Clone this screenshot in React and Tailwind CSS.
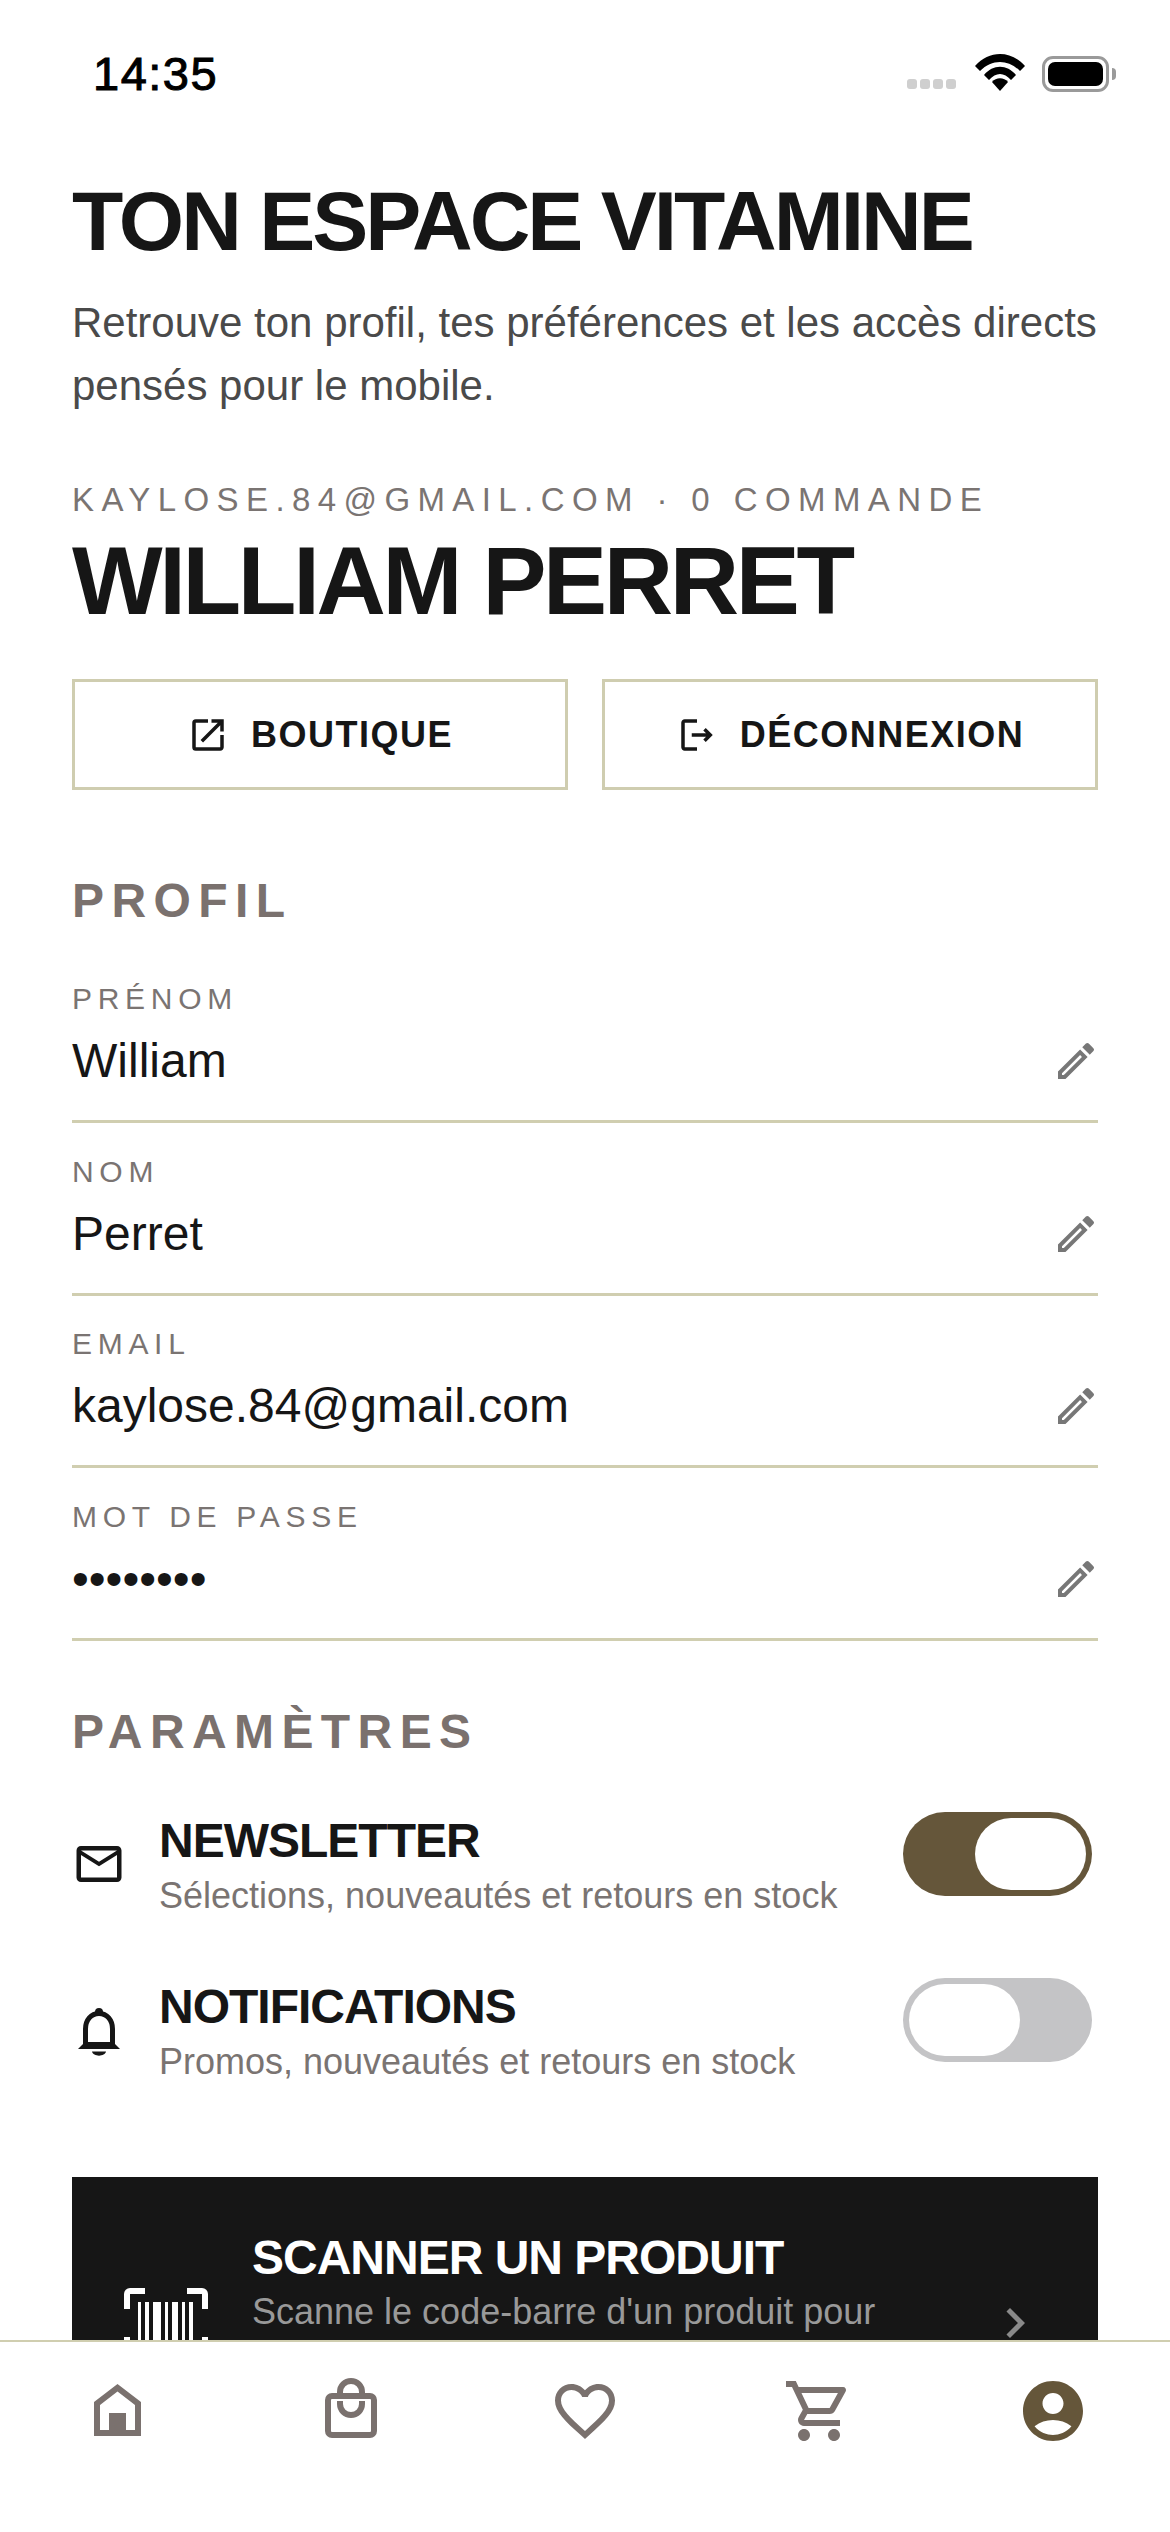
import React from 'react';
import {
  MdOutlineOpenInNew,
  MdOutlineLogout,
  MdOutlineEdit,
  MdOutlineMailOutline,
  MdChevronRight,
  MdFavoriteBorder,
  MdOutlineShoppingCart,
  MdAccountCircle,
} from 'react-icons/md';

const fields = [
  { label: 'PRÉNOM', value: 'William' },
  { label: 'NOM', value: 'Perret' },
  { label: 'EMAIL', value: 'kaylose.84@gmail.com' },
  { label: 'MOT DE PASSE', value: '••••••••' },
];

const StatusBar = () => (
  <div className="relative h-[173px] shrink-0">
    <span className="absolute left-[93px] top-[46px] text-[47px] leading-[56px] font-normal tracking-[1.5px] text-black [-webkit-text-stroke:1px_#000]">
      14:35
    </span>
    <div className="absolute left-[907px] top-[79px] flex gap-[3px]">
      <span className="w-[10px] h-[10px] rounded-[3px] bg-[#cfcfcf]" />
      <span className="w-[10px] h-[10px] rounded-[3px] bg-[#cfcfcf]" />
      <span className="w-[10px] h-[10px] rounded-[3px] bg-[#cfcfcf]" />
      <span className="w-[10px] h-[10px] rounded-[3px] bg-[#cfcfcf]" />
    </div>
    <svg className="absolute left-[975px] top-[53px]" width="50" height="38" viewBox="0 0 50 38">
      <path d="M0 13 C14 -3 36 -3 50 13 L45 18 C33 6 17 6 5 18Z" fill="#000" />
      <path d="M9 22 C18 11 32 11 41 22 L36 27 C29 19 21 19 14 27Z" fill="#000" />
      <path d="M17 29 C21 24 29 24 33 29 L25 38Z" fill="#000" />
    </svg>
    <div className="absolute left-[1042px] top-[56px] w-[67px] h-[36px] rounded-[11px] border-[3px] border-[#9a9a9a] p-[3px]">
      <div className="w-full h-full rounded-[7px] bg-black" />
    </div>
    <span className="absolute left-[1112px] top-[68px] w-[4px] h-[12px] rounded-r-full bg-[#9a9a9a]" />
  </div>
);

const BarcodeIcon = () => (
  <svg className="shrink-0" width="84" height="70" viewBox="0 0 84 70" fill="#fff">
    <path d="M0 21V6a6 6 0 0 1 6-6h15v6H6v15z" />
    <path d="M84 21V6a6 6 0 0 0-6-6H63v6h15v15z" />
    <path d="M0 49v15a6 6 0 0 0 6 6h15v-6H6V49z" />
    <path d="M84 49v15a6 6 0 0 1-6 6H63v-6h15V49z" />
    <rect x="14" y="14" width="3" height="42" />
    <rect x="21" y="14" width="4" height="42" />
    <rect x="29" y="14" width="8" height="42" />
    <rect x="41" y="14" width="3" height="42" />
    <rect x="48" y="14" width="6" height="42" />
    <rect x="58" y="14" width="3" height="42" />
    <rect x="65" y="14" width="4" height="42" />
  </svg>
);

const HomeIcon = () => (
  <svg width="47" height="52" viewBox="0 0 47 52" fill="#7a716e">
    <path
      fillRule="evenodd"
      d="M23.5 0L47 18V52H0V18ZM23.5 7.5L6 21V46H15V29H32V46H41V21Z"
    />
  </svg>
);

// bag with the handle looping over the top and a U under the band
const BagIcon = () => (
  <svg width="52" height="60" viewBox="0 0 52 60" fill="none" stroke="#7a716e" strokeWidth="6">
    <rect x="3" y="18" width="46" height="39" rx="4" />
    <path d="M15 18V14A11 11 0 0 1 37 14V18" />
    <path d="M15 23V26A11 11 0 0 0 37 26V23" />
  </svg>
);

// bell from the reference: dome, flared base and a small clapper
const BellIcon = () => (
  <svg width="42" height="48" viewBox="0 0 42 48" fill="#161616">
    <circle cx="21" cy="4" r="4" />
    <path d="M7.5 37V21C7.5 12 13 5.5 21 5.5S34.5 12 34.5 21V37" fill="none" stroke="#161616" strokeWidth="5" />
    <path d="M0 41L7 34H35L42 41Z" />
    <path d="M14 43.5H28C27 49 15 49 14 43.5Z" />
  </svg>
);

const Toggle = ({ on }) => (
  <div
    className={`w-[189px] h-[84px] rounded-full p-[6px] shrink-0 mr-[6px] flex ${
      on ? 'bg-[#65563a] justify-end' : 'bg-[#c4c4c6] justify-start'
    }`}
  >
    <div className="w-[111px] h-[72px] rounded-full bg-white" />
  </div>
);

const SettingRow = ({ icon, iconClass, title, text, on }) => (
  <div className="flex items-start">
    <div className={`w-[54px] shrink-0 flex justify-center ${iconClass}`}>{icon}</div>
    <div className="ml-[33px] flex-1 pt-[5px]">
      <div className="text-[48px] leading-[48px] font-bold tracking-[-1px] text-[#161616]">{title}</div>
      <div className="mt-[9px] text-[36px] leading-[44px] text-[#7a7472]">{text}</div>
    </div>
    <Toggle on={on} />
  </div>
);

export default function App() {
  return (
    <div className="w-[1170px] h-[2532px] flex flex-col overflow-hidden bg-white font-['Liberation_Sans',Arial,sans-serif]">
      <div className="flex-1 min-h-0 overflow-hidden">
        <StatusBar />
        <div className="px-[72px]">
          <h1 className="text-[84px] leading-[96px] font-bold tracking-[-3px] text-[#161616]">TON ESPACE VITAMINE</h1>
          <p className="mt-[22px] text-[42px] leading-[63px] text-[#4a4a4a]">
            Retrouve ton profil, tes préférences et les accès directs pensés pour le mobile.
          </p>
          <div className="mt-[63px] text-[33px] leading-[40px] tracking-[7.4px] text-[#7a7472]">
            KAYLOSE.84@GMAIL.COM · 0 COMMANDE
          </div>
          <div className="mt-[13px] text-[96px] leading-[96px] font-bold tracking-[-3.35px] text-[#161616]">WILLIAM PERRET</div>

          <div className="mt-[50px] grid grid-cols-2 gap-[34px]">
            <button className="h-[111px] border-[3px] border-[#cfcdb0] flex items-center justify-center gap-[22px] text-[36px] font-bold tracking-[1.5px] text-[#161616]">
              <MdOutlineOpenInNew size={42} />
              BOUTIQUE
            </button>
            <button className="h-[111px] border-[3px] border-[#cfcdb0] flex items-center justify-center gap-[22px] text-[36px] font-bold tracking-[1.5px] text-[#161616]">
              <MdOutlineLogout size={42} />
              DÉCONNEXION
            </button>
          </div>

          <h2 className="mt-[87px] text-[48px] leading-[48px] font-bold tracking-[7.4px] text-[#7a716e]">PROFIL</h2>
          <div className="mt-[56px] flex flex-col gap-[30.67px]">
            {fields.map((field) => (
              <div key={field.label} className="border-b-[3px] border-[#d0ceb0] pb-[29px]">
                <div className="text-[30px] leading-[36px] tracking-[5.7px] text-[#7a7472]">{field.label}</div>
                <div className="mt-[14px] flex items-center justify-between">
                  <span className="text-[48px] leading-[60px] text-[#161616]">{field.value}</span>
                  <MdOutlineEdit size={48} className="text-[#777777] -mr-[2px]" />
                </div>
              </div>
            ))}
          </div>

          <h2 className="mt-[67px] text-[48px] leading-[48px] font-bold tracking-[7.4px] text-[#7a716e]">PARAMÈTRES</h2>
          <div className="mt-[56px] flex flex-col gap-[60px]">
            <SettingRow
              icon={<MdOutlineMailOutline size={54} className="text-[#161616]" />}
              iconClass="mt-[25px]"
              title="NEWSLETTER"
              text="Sélections, nouveautés et retours en stock"
              on
            />
            <SettingRow
              icon={<BellIcon />}
              iconClass="mt-[30px]"
              title="NOTIFICATIONS"
              text="Promos, nouveautés et retours en stock"
              on={false}
            />
          </div>

          <div className="mt-[93px] h-[292px] bg-[#161616] flex items-center pl-[52px] pr-[53px]">
            <BarcodeIcon />
            <div className="ml-[44px] flex-1 self-start pt-[57px]">
              <div className="text-[48px] leading-[48px] font-bold tracking-[-1px] text-white">SCANNER UN PRODUIT</div>
              <div className="mt-[8px] text-[36px] leading-[44px] text-[#999999]">Scanne le code-barre d'un produit pour</div>
            </div>
            <MdChevronRight size={60} className="text-[#8a8a8a] shrink-0" />
          </div>
        </div>
      </div>

      <nav className="h-[192px] shrink-0 border-t-2 border-[#d0ceb0] bg-white grid grid-cols-5 items-start text-[#7a716e]">
        <div className="flex justify-center pt-[42px]"><HomeIcon /></div>
        <div className="flex justify-center pt-[36px]"><BagIcon /></div>
        <div className="flex justify-center pt-[33px]"><MdFavoriteBorder size={72} /></div>
        <div className="flex justify-center pt-[33px]"><MdOutlineShoppingCart size={72} /></div>
        <div className="flex justify-center pt-[33px] text-[#65563a]"><MdAccountCircle size={72} /></div>
      </nav>
    </div>
  );
}
